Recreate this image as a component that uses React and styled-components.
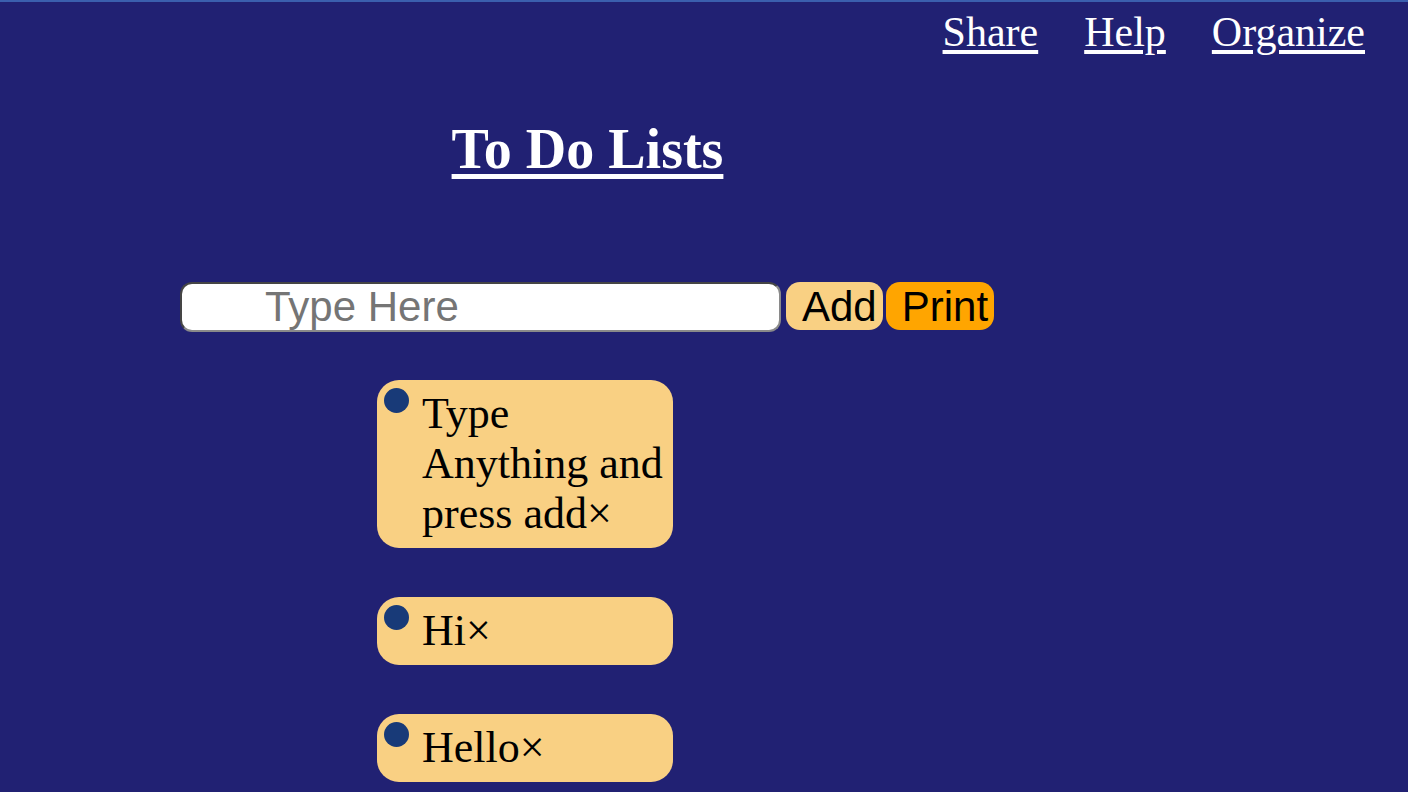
import React from "react";
import styled, { createGlobalStyle } from "styled-components";

const GlobalStyle = createGlobalStyle`
  html, body {
    margin: 0;
    background: #212173;
  }
  body {
    font-family: "Liberation Serif", "Times New Roman", serif;
  }
`;

const Page = styled.div`
  min-height: 792px;
  border-top: 2px solid #3b5fae;
  box-sizing: border-box;
`;

const Nav = styled.nav`
  display: flex;
  justify-content: flex-end;
  gap: 46px;
  padding: 6px 43px 0 0;
`;

const NavLink = styled.a`
  color: #fff;
  font-size: 42px;
  text-decoration: underline;
  text-underline-offset: 4px;
  cursor: pointer;
`;

const Main = styled.main`
  width: 815px;
  margin: 61px 0 0 180px;
`;

const Title = styled.h1`
  margin: 0;
  text-align: center;
  color: #fff;
  font-size: 56px;
  font-weight: bold;
  text-decoration: underline;
  text-underline-offset: 6px;
`;

const InputRow = styled.div`
  display: flex;
  align-items: flex-start;
  gap: 3px;
  margin-top: 101px;
`;

const TextInput = styled.input`
  width: 601px;
  height: 50px;
  box-sizing: border-box;
  padding: 0 0 0 83px;
  margin-right: 2px;
  border: 2px solid #454545;
  border-right-color: #8a8a8a;
  border-bottom-color: #8a8a8a;
  border-radius: 12px;
  background: #fff;
  font-family: "Liberation Sans", Arial, sans-serif;
  font-size: 42px;
  outline: none;

  &::placeholder {
    color: #757575;
  }
`;

const Button = styled.button`
  height: 48px;
  padding: 0 6px 0 16px;
  border: none;
  border-radius: 14px;
  background: ${(p) => (p.$strong ? "#ffa500" : "#f9d083")};
  color: #000;
  font-family: "Liberation Sans", Arial, sans-serif;
  font-size: 42px;
  line-height: 50px;
  cursor: pointer;
`;

const List = styled.ul`
  list-style: none;
  margin: 48px 0 0 197px;
  padding: 0;
  display: flex;
  flex-direction: column;
  gap: 49px;
`;

const Card = styled.li`
  width: 296px;
  box-sizing: border-box;
  display: flex;
  align-items: flex-start;
  gap: 13px;
  padding: 9px 8px 9px 7px;
  border-radius: 22px;
  background: #f9d083;
  color: #000;
  font-size: 44px;
  line-height: 50px;
`;

const Dot = styled.span`
  flex-shrink: 0;
  width: 25px;
  height: 25px;
  margin-top: -1px;
  border-radius: 50%;
  background: #183a78;
`;

const items = ["Type Anything and press add", "Hi", "Hello"];

export default function App() {
  return (
    <Page>
      <GlobalStyle />
      <Nav>
        <NavLink>Share</NavLink>
        <NavLink>Help</NavLink>
        <NavLink>Organize</NavLink>
      </Nav>
      <Main>
        <Title>To Do Lists</Title>
        <InputRow>
          <TextInput placeholder="Type Here" />
          <Button>Add</Button>
          <Button $strong>Print</Button>
        </InputRow>
        <List>
          {items.map((t) => (
            <Card key={t}>
              <Dot />
              <span>{t + "×"}</span>
            </Card>
          ))}
        </List>
      </Main>
    </Page>
  );
}
